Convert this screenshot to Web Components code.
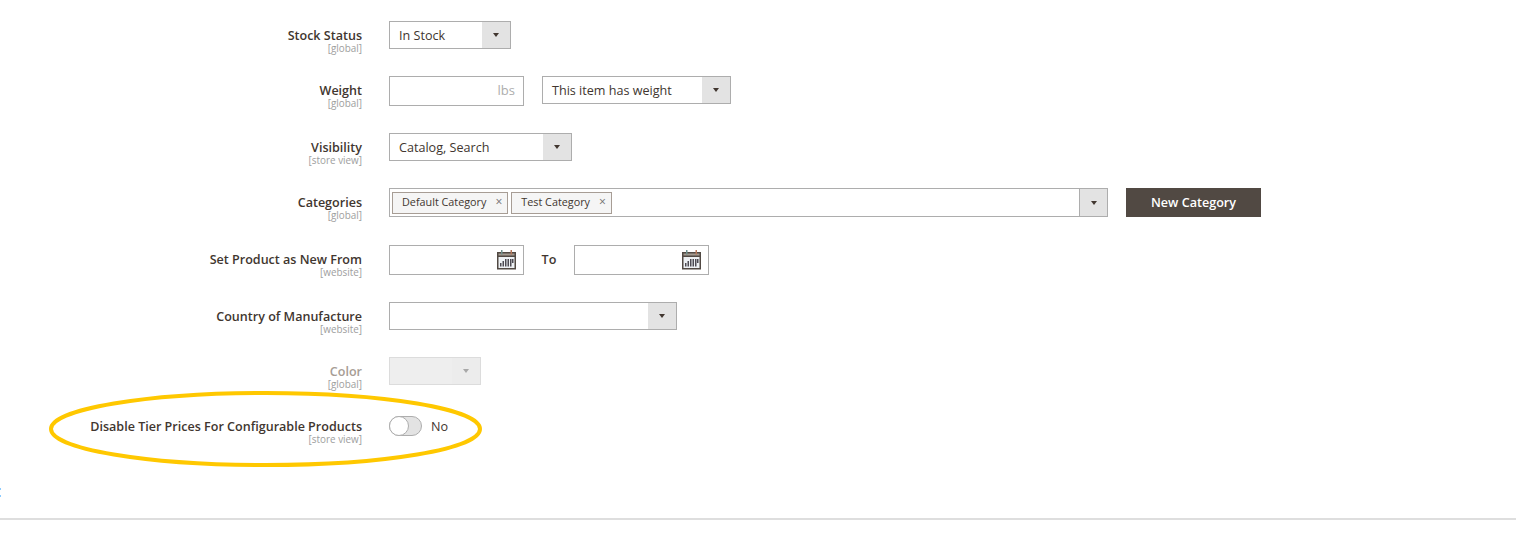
<!DOCTYPE html>
<html>
<head>
<meta charset="utf-8">
<style>
  html, body { margin: 0; background: #fff; }
  body { font-family: "Open Sans", sans-serif; color: #41362f; height: 560px; overflow: hidden; }
</style>
</head>
<body>
<product-form></product-form>
<script>
class FieldRow extends HTMLElement {
    constructor() {
        super();
        this.attachShadow({ mode: 'open' });
    }
    connectedCallback() {
        const muted = this.hasAttribute('disabled');
        this.shadowRoot.innerHTML = `
            <style>
                :host { display: flex; align-items: flex-start; margin-bottom: 27px; }
                .label { width: 362px; flex: none; text-align: right; padding-top: 7px; margin-bottom: -20px; }
                .name { display: block; font-size: 12.55px; font-weight: 600; line-height: 15px; color: ${muted ? '#a79d95' : '#41362f'}; }
                .scope { display: block; font-size: 9.9px; line-height: 11px; color: #9e9e9e; }
                .control { margin-left: 27px; display: flex; align-items: flex-start; flex: 1; }
            </style>
            <div class="label"><span class="name">${this.getAttribute('label')}</span><span class="scope">${this.getAttribute('scope')}</span></div>
            <div class="control"><slot></slot></div>
        `;
    }
}

class SelectBox extends HTMLElement {
    constructor() {
        super();
        this.attachShadow({ mode: 'open' });
    }
    connectedCallback() {
        const off = this.hasAttribute('disabled');
        this.shadowRoot.innerHTML = `
            <style>
                :host { display: flex; box-sizing: border-box; height: 28px; width: ${this.getAttribute('width')}px; border: 1px solid ${off ? '#dcdcdc' : '#adadad'}; background: ${off ? '#eeeeee' : '#fff'}; font-size: 12.6px; flex: none; }
                .value { flex: 1; padding-left: 9px; line-height: 27px; white-space: nowrap; color: #41362f; }
                .arrow { width: 28px; background: ${off ? '#ececec' : '#e3e3e3'}; display: flex; align-items: center; justify-content: center; }
                .arrow i { width: 0; height: 0; border: 3.75px solid transparent; border-top: 4.5px solid ${off ? '#a8a8a8' : '#41362f'}; border-bottom: 0; }
            </style>
            <div class="value"><slot></slot></div>
            <div class="arrow"><i></i></div>
        `;
    }
}

class TextBox extends HTMLElement {
    constructor() {
        super();
        this.attachShadow({ mode: 'open' });
    }
    connectedCallback() {
        this.shadowRoot.innerHTML = `
            <style>
                :host { display: flex; box-sizing: border-box; height: 30px; width: 135px; border: 1px solid #adadad; background: #fff; align-items: center; justify-content: flex-end; flex: none; padding: 0 8px 2px 0; font-size: 13px; color: #adadad; }
            </style>
            <slot></slot>
        `;
    }
}

class DateBox extends HTMLElement {
    constructor() {
        super();
        this.attachShadow({ mode: 'open' });
    }
    connectedCallback() {
        this.shadowRoot.innerHTML = `
            <style>
                :host { display: flex; box-sizing: border-box; height: 30px; width: 135px; border: 1px solid #adadad; background: #fff; align-items: center; justify-content: flex-end; padding-right: 7px; flex: none; }
                svg { display: block; }
            </style>
            <svg width="19" height="20" viewBox="0 0 19 20">
                <rect x="0" y="2" width="19" height="17.500" fill="#514943"/>
                <rect x="1.500" y="7" width="16" height="11" fill="#eef1f4"/>
                <rect x="1.500" y="3.500" width="16" height="2" fill="#a39a90"/>
                <rect x="4" y="0" width="1.500" height="4.500" fill="#6f8f8c"/>
                <rect x="13.500" y="0" width="1.500" height="4.500" fill="#b5775a"/>
                <path d="M3 13h1.500v3.500H3zM5.500 11h1.500v5.500H5.500zM8 9h1.500v7.500H8zM10.500 9H12v7.500h-1.500zM13 9h1.500v7.500H13zM15 9h1.500v4H15z" fill="#4d4a52"/>
            </svg>
        `;
    }
}

class CategoryTag extends HTMLElement {
    constructor() {
        super();
        this.attachShadow({ mode: 'open' });
    }
    connectedCallback() {
        this.shadowRoot.innerHTML = `
            <style>
                :host { display: flex; align-items: center; box-sizing: border-box; height: 22px; border: 1px solid #a79d95; background: #f5f5f5; padding: 0 5px 3px 9px; font-size: 10.8px; color: #41362f; white-space: nowrap; flex: none; }
                span { margin-left: 9px; color: #6f6f6f; font-size: 12px; }
            </style>
            <slot></slot><span>×</span>
        `;
    }
}

class CategoryPicker extends HTMLElement {
    constructor() {
        super();
        this.attachShadow({ mode: 'open' });
    }
    connectedCallback() {
        this.shadowRoot.innerHTML = `
            <style>
                :host { display: flex; box-sizing: border-box; width: 719px; height: 29px; border: 1px solid #adadad; background: #fff; flex: none; margin-bottom: 1px; }
                .tags { flex: 1; display: flex; gap: 3px; padding: 3px 0 0 2px; }
                .arrow { box-sizing: border-box; width: 28px; background: #e3e3e3; border-left: 1px solid #adadad; display: flex; align-items: center; justify-content: center; }
                .arrow i { width: 0; height: 0; border: 3.75px solid transparent; border-top: 4.5px solid #41362f; border-bottom: 0; }
            </style>
            <div class="tags"><slot></slot></div>
            <div class="arrow"><i></i></div>
        `;
    }
}

class ToggleSwitch extends HTMLElement {
    constructor() {
        super();
        this.attachShadow({ mode: 'open' });
    }
    connectedCallback() {
        this.shadowRoot.innerHTML = `
            <style>
                :host { display: flex; align-items: center; height: 28px; font-size: 12.6px; color: #41362f; }
                .track { box-sizing: border-box; width: 33px; height: 20px; border: 1px solid #adadad; border-radius: 10px; background: #e3e3e3; margin-right: 9px; position: relative; }
                .knob { position: absolute; left: -1px; top: -1px; box-sizing: border-box; width: 20px; height: 20px; border-radius: 50%; border: 1px solid #adadad; background: #fff; }
            </style>
            <div class="track"><div class="knob"></div></div>
            <slot></slot>
        `;
    }
}

class ProductForm extends HTMLElement {
    constructor() {
        super();
        this.attachShadow({ mode: 'open' });
    }
    connectedCallback() {
        this.shadowRoot.innerHTML = `
            <style>
                :host { display: block; position: relative; height: 560px; box-sizing: border-box; padding-top: 21px; }
                .gap { margin-left: 18px; }
                .to { font-size: 12.6px; font-weight: 600; line-height: 30px; width: 50px; text-align: center; flex: none; }
                .new { margin-left: 18px; box-sizing: border-box; width: 135px; height: 29px; background: #514943; color: #fff; font: 600 12.6px "Open Sans", sans-serif; border: 0; padding: 0; flex: none; }
                .rule { position: absolute; left: 0; right: 0; top: 518px; height: 2px; background: #dedede; }
                .mark { position: absolute; left: 48px; top: 390px; }
                .specks { position: absolute; left: 0; top: 488px; width: 1px; height: 9px; border-top: 2px solid #8ccbff; border-bottom: 2px solid #8ccbff; box-sizing: border-box; }
            </style>
            <field-row label="Stock Status" scope="[global]"><select-box width="122">In Stock</select-box></field-row>
            <field-row label="Weight" scope="[global]"><text-box>lbs</text-box><select-box class="gap" width="189">This item has weight</select-box></field-row>
            <field-row label="Visibility" scope="[store view]"><select-box width="183">Catalog, Search</select-box></field-row>
            <field-row label="Categories" scope="[global]">
                <category-picker><category-tag>Default Category</category-tag><category-tag>Test Category</category-tag></category-picker>
                <button class="new">New Category</button>
            </field-row>
            <field-row label="Set Product as New From" scope="[website]"><date-box></date-box><span class="to">To</span><date-box></date-box></field-row>
            <field-row label="Country of Manufacture" scope="[website]"><select-box width="288"></select-box></field-row>
            <field-row label="Color" scope="[global]" disabled><select-box width="92" disabled></select-box></field-row>
            <field-row label="Disable Tier Prices For Configurable Products" scope="[store view]"><toggle-switch>No</toggle-switch></field-row>
            <svg class="mark" width="436" height="78" viewBox="0 0 436 78"><ellipse cx="217.500" cy="39" rx="214.500" ry="36" fill="none" stroke="#ffc800" stroke-width="4"/></svg>
            <div class="specks"></div>
            <div class="rule"></div>
        `;
    }
}

customElements.define('field-row', FieldRow);
customElements.define('select-box', SelectBox);
customElements.define('text-box', TextBox);
customElements.define('date-box', DateBox);
customElements.define('category-tag', CategoryTag);
customElements.define('category-picker', CategoryPicker);
customElements.define('toggle-switch', ToggleSwitch);
customElements.define('product-form', ProductForm);
</script>
</body>
</html>
